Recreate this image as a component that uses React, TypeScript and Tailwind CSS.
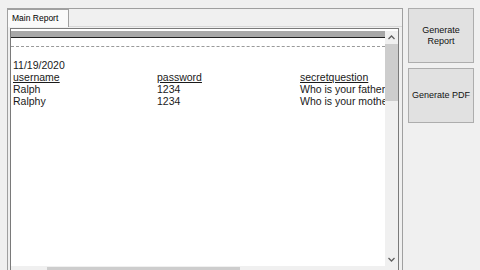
// Report form: tab control with a report viewer on the left, two command buttons on the right.

const rows = [
    { user: "Ralph", pass: "1234", question: "Who is your father" },
    { user: "Ralphy", pass: "1234", question: "Who is your mother" },
];

function ScrollArrow({ up }: { up?: boolean }) {
    return (
        <svg width="7" height="5" viewBox="0 0 7 5" className="block">
            <path
                d={up ? "M0.5 4 L3.5 1 L6.5 4" : "M0.5 1 L3.5 4 L6.5 1"}
                fill="none"
                stroke="#606060"
                strokeWidth="1.3"
            />
        </svg>
    );
}

function ReportViewer() {
    return (
        <div className="ml-[2px] mr-[3px] flex-1 flex flex-col border-x border-t border-[#7a7a7a] bg-white min-h-0">
            <div className="flex flex-1 min-h-0 pt-[2px]">
                {/* report surface */}
                <div className="flex-1 flex flex-col overflow-hidden min-w-0">
                    <div className="h-[7px] bg-[#a8a8a8] border-b border-[#202020] shrink-0" />
                    <div className="mt-[8px] border-t border-dashed border-[#9a9a9a] shrink-0" />
                    <div className="pl-[2px] pt-[12px] text-[10.5px] leading-[12px] text-[#1a1a1a] whitespace-nowrap">
                        <div>11/19/2020</div>
                        <div className="flex underline">
                            <span className="w-[144px] shrink-0">username</span>
                            <span className="w-[143px] shrink-0">password</span>
                            <span className="shrink-0">secretquestion</span>
                        </div>
                        {rows.map((r) => (
                            <div key={r.user} className="flex">
                                <span className="w-[144px] shrink-0">{r.user}</span>
                                <span className="w-[143px] shrink-0">{r.pass}</span>
                                <span className="shrink-0">{r.question}</span>
                            </div>
                        ))}
                    </div>
                </div>
                {/* vertical scrollbar */}
                <div className="w-[13px] shrink-0 bg-[#f0f0f0] flex flex-col items-center">
                    <div className="h-[13px] flex items-center justify-center">
                        <ScrollArrow up />
                    </div>
                    <div className="w-[13px] h-[57px] bg-[#cdcdcd]" />
                    <div className="flex-1" />
                    <div className="h-[13px] flex items-center justify-center">
                        <ScrollArrow />
                    </div>
                </div>
            </div>
            {/* horizontal scrollbar, mostly cut off */}
            <div className="h-[4px] shrink-0 bg-[#f0f0f0] flex">
                <div className="ml-[36px] w-[193px] mt-[1px] bg-[#cdcdcd]" />
            </div>
        </div>
    );
}

function FormButton({ children }: { children: React.ReactNode }) {
    return (
        <button className="w-[66px] h-[55px] bg-[#e1e1e1] border border-[#adadad] text-[9px] leading-[11px] text-[#111] text-center">
            {children}
        </button>
    );
}

export default function App() {
    return (
        <div
            className="w-[480px] h-[270px] bg-[#f0f0f0] flex overflow-hidden"
            style={{ fontFamily: '"Liberation Sans", Arial, sans-serif' }}
        >
            {/* tab control */}
            <div className="ml-[7px] mt-[8px] w-[396px] flex flex-col border-x border-t border-[#a0a0a0]">
                <div className="h-[18px] flex shrink-0">
                    <div className="w-[61px] h-[18px] border-r border-t border-[#a0a0a0] bg-[#fafafa] flex items-center pl-[4px] text-[8.5px] text-black">
                        Main Report
                    </div>
                    <div className="flex-1 border-b border-[#d8d8d8]" />
                </div>
                <div className="h-[1px] shrink-0" />
                <ReportViewer />
            </div>

            {/* buttons */}
            <div className="ml-[5px] mt-[8px] flex flex-col gap-[5px]">
                <FormButton>
                    Generate
                    <br />
                    Report
                </FormButton>
                <FormButton>Generate PDF</FormButton>
            </div>
        </div>
    );
}
